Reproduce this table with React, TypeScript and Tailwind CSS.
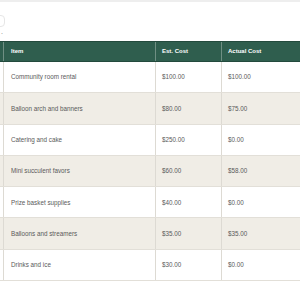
import React from "react";

const rows = [
  ["Community room rental", "$100.00", "$100.00"],
  ["Balloon arch and banners", "$80.00", "$75.00"],
  ["Catering and cake", "$250.00", "$0.00"],
  ["Mini succulent favors", "$60.00", "$58.00"],
  ["Prize basket supplies", "$40.00", "$0.00"],
  ["Balloons and streamers", "$35.00", "$35.00"],
  ["Drinks and ice", "$30.00", "$0.00"],
];

export default function App() {
  return (
    <div
      className="w-[300px] h-[300px] overflow-hidden bg-white"
      style={{ fontFamily: '"Liberation Sans", Arial, sans-serif' }}
    >
      <div className="h-[2px] bg-[#eeeeee]" />
      <div className="h-[39px] flex flex-col">
        <div className="mt-[13px] -ml-[40px] w-[45px] h-[12px] rounded-[4px] border border-[#e6e6e6]" />
        <div className="ml-[1px] mt-[1px] text-[7px] leading-[7px] text-[#777]">.</div>
      </div>
      <div className="-ml-[60px] w-[460px]">
        <div className="flex h-[21px] bg-[#2f5e4e] border-y border-[#234a3d] text-white text-[6px] font-bold">
          <div className="w-[64px] border-r border-[#6f8f83]" />
          <div className="w-[152px] flex items-center pl-[7px] border-r border-[#6f8f83]">Item</div>
          <div className="w-[66px] flex items-center pl-[6px] border-r border-[#6f8f83]">Est. Cost</div>
          <div className="w-[90px] flex items-center pl-[6px] border-r border-[#6f8f83]">Actual Cost</div>
          <div className="flex-1" />
        </div>
        {rows.map((r, i) => (
          <div
            key={i}
            className={`flex h-[31.3px] border-b border-[#e2dfd8] text-[6.3px] text-[#5a5a5a] ${
              i % 2 === 1 ? "bg-[#f0ede6]" : "bg-white"
            }`}
          >
            <div className="w-[64px] border-r border-[#dddad3]" />
            <div className="w-[152px] flex items-center pl-[7px] border-r border-[#dddad3]">{r[0]}</div>
            <div className="w-[66px] flex items-center pl-[6px] border-r border-[#dddad3]">{r[1]}</div>
            <div className="w-[90px] flex items-center pl-[6px] border-r border-[#dddad3]">{r[2]}</div>
            <div className="flex-1" />
          </div>
        ))}
      </div>
    </div>
  );
}
